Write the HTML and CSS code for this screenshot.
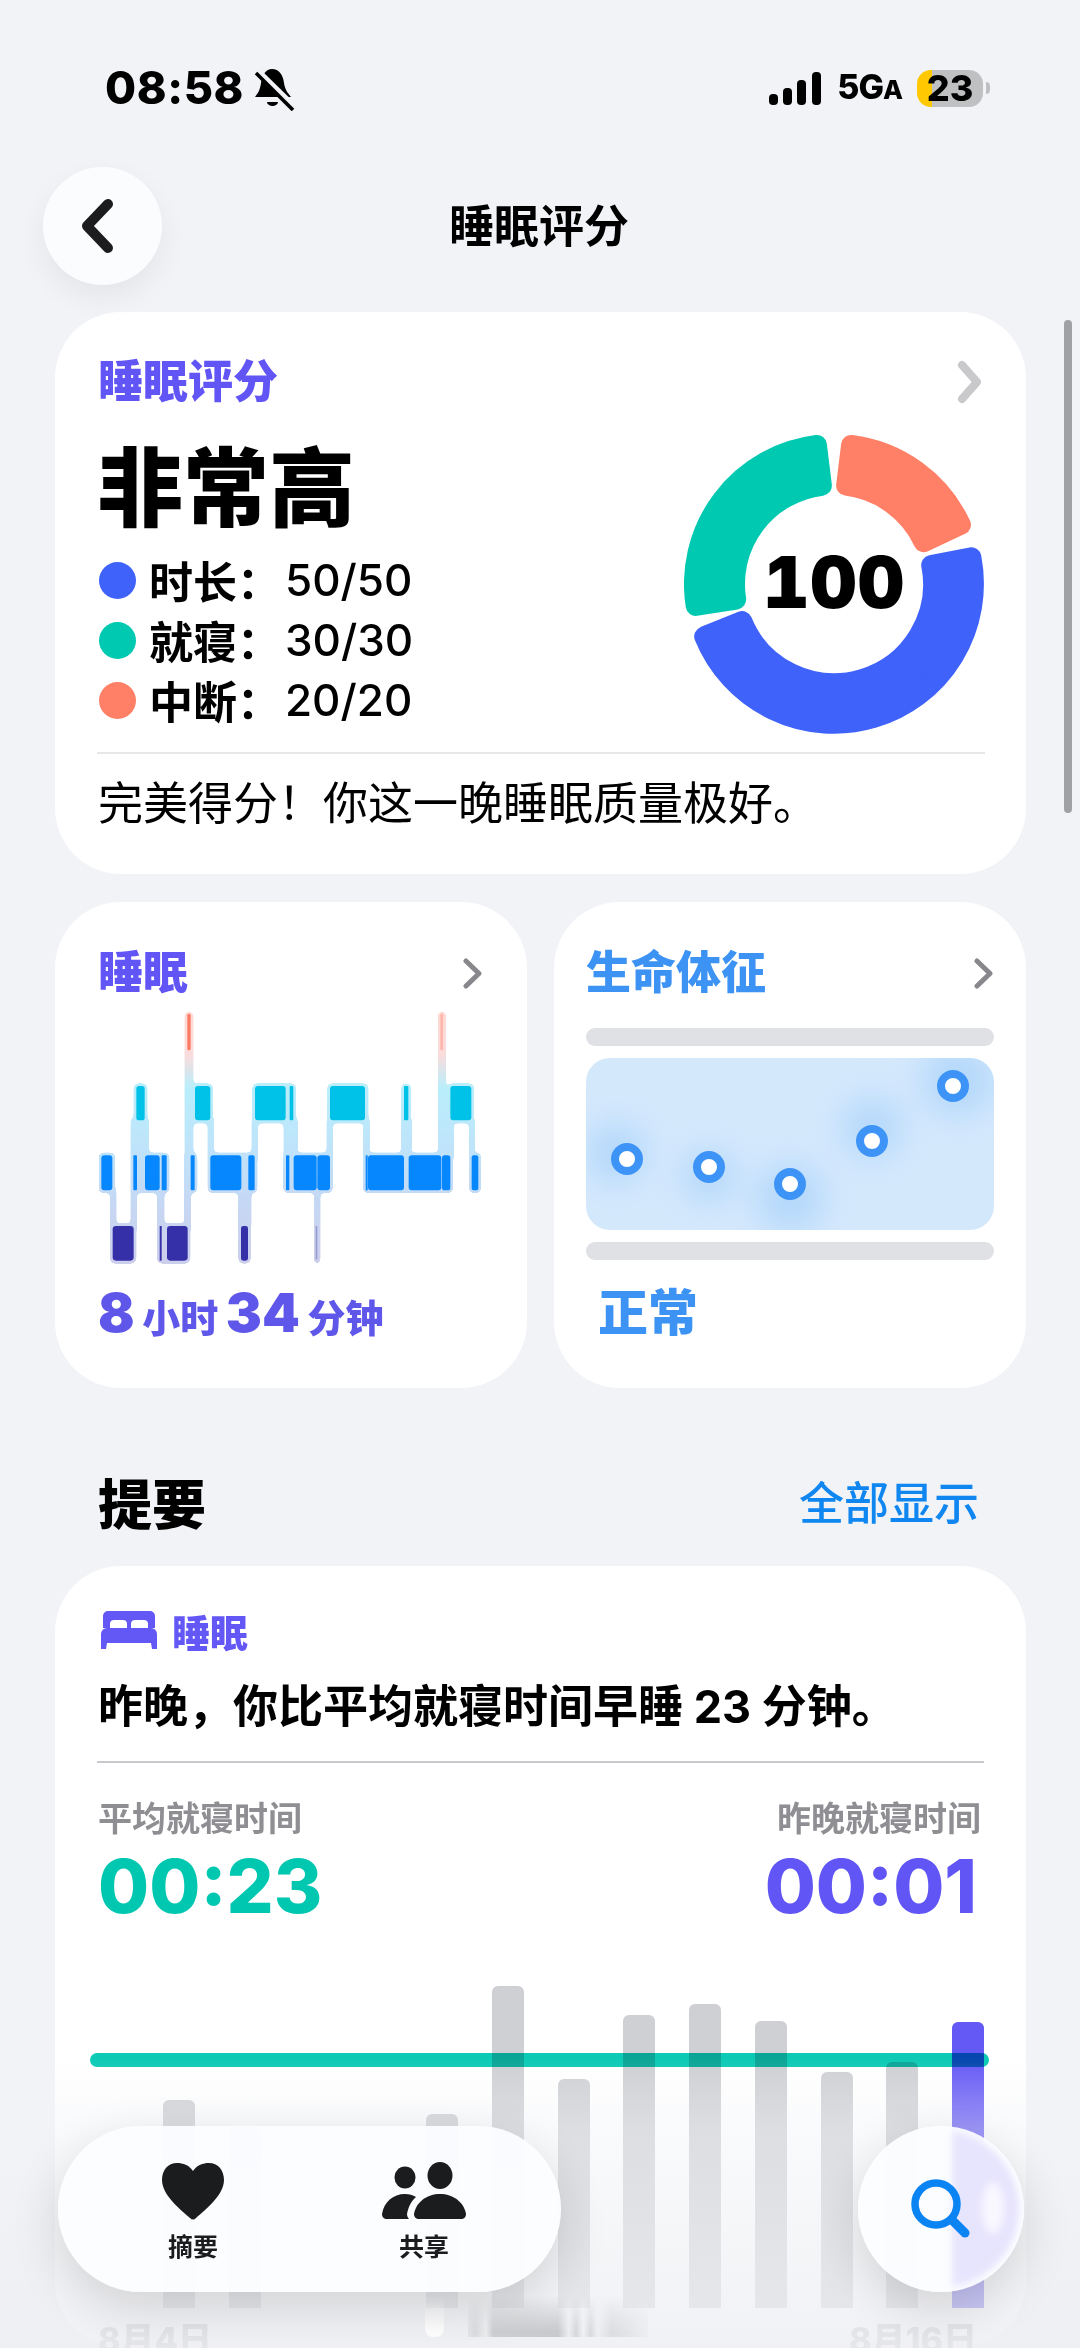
FILE: index.html
```html
<!DOCTYPE html>
<html lang="zh">
<head>
  <meta charset="UTF-8">
  <title>睡眠评分</title>
  <link rel="stylesheet" href="styles.css">
</head>
<body>

<div class="status">
  <div class="status-left">
    <span class="clock">08:58</span>
    <svg class="bell" viewBox="14 15 42 46">
      <path d="M33 19C40 19 44 25 45 33C46 40 49 43 52 47H16C19 43 21 40 22 33C23 25 27 19 33 19Z"/>
      <path d="M28 52h11a5.5 4 0 0 1-11 0Z"/>
      <path d="M17 20L57 59" stroke="#f1f3f7" stroke-width="7"/>
      <path d="M17 23L54 60" stroke="#000" stroke-width="3.6"/>
    </svg>
  </div>
  <div class="status-right">
    <svg class="signal" viewBox="0 0 52 33">
      <rect x="0" y="22" width="9" height="11" rx="4"/>
      <rect x="14" y="16" width="9" height="17" rx="4"/>
      <rect x="28" y="8" width="9" height="25" rx="4"/>
      <rect x="43" y="0" width="9" height="33" rx="4"/>
    </svg>
    <span class="net">5G<small>A</small></span>
    <span class="battery"><span class="battery-num">23</span></span>
    <span class="battery-nub"></span>
  </div>
</div>

<div class="topbar">
  <div class="back">
    <svg width="40" height="60" viewBox="0 0 40 60"><path d="M29 8L8 30L29 52" fill="none" stroke="#1c1c1e" stroke-width="10" stroke-linecap="round" stroke-linejoin="round"/></svg>
  </div>
  <div class="page-title">睡眠评分</div>
</div>

<main class="content">

  <section class="card score">
    <div class="card-head">
      <h3 class="card-title purple">睡眠评分</h3>
      <svg class="chev-big" width="25" height="44" viewBox="0 0 25 44"><path d="M5 5L20 22L5 39" fill="none" stroke="#c9c9cb" stroke-width="8" stroke-linecap="round" stroke-linejoin="round"/></svg>
    </div>
    <div class="score-body">
      <div>
        <div class="score-word">非常高</div>
        <ul class="legend">
          <li><i class="dot blue"></i><b>时长<i class="colon">&#xFF1A;</i></b><span>50/50</span></li>
          <li><i class="dot teal"></i><b>就寝<i class="colon">&#xFF1A;</i></b><span>30/30</span></li>
          <li><i class="dot coral"></i><b>中断<i class="colon">&#xFF1A;</i></b><span>20/20</span></li>
        </ul>
      </div>
      <div class="donut">
        <svg width="300" height="300" viewBox="0 0 300 300">
          <path fill="#3f62fb" stroke="#3f62fb" d="M287.4 123.3A140 140 0 0 1 20.2 202.4L58.2 187.1A99 99 0 0 0 247.2 131.1Z"/>
          <path fill="#00c9b1" stroke="#00c9b1" d="M11.7 171.9A140 140 0 0 1 132.9 11L137.9 51.7A99 99 0 0 0 52.2 165.5Z"/>
          <path fill="#ff8066" stroke="#ff8066" d="M167.1 11A140 140 0 0 1 276.9 90.8L239.7 108.2A99 99 0 0 0 162.1 51.7Z"/>
        </svg>
        <span class="donut-num">100</span>
      </div>
    </div>
    <div class="rule"></div>
    <p class="score-note">完美得分&#xFF01;你这一晚睡眠质量极好。</p>
  </section>

  <div class="two-up">
    <section class="card mini sleep">
      <div class="card-head">
        <h3 class="card-title purple">睡眠</h3>
        <svg class="chev" width="19" height="31" viewBox="0 0 19 31"><path d="M3 3L16 15.5L3 28" fill="none" stroke="#88888c" stroke-width="5" stroke-linecap="round" stroke-linejoin="round"/></svg>
      </div>
      <svg class="hypno" width="384" height="254" viewBox="150 340 1152 762">
        <defs>
          <linearGradient id="halo" gradientUnits="userSpaceOnUse" x1="0" y1="340" x2="0" y2="1095">
            <stop offset="0" stop-color="#ffd9d2"/>
            <stop offset=".17" stop-color="#fadcdc"/>
            <stop offset=".3" stop-color="#b9eefb"/>
            <stop offset=".55" stop-color="#bfe3fa"/>
            <stop offset=".75" stop-color="#c5d8f4"/>
            <stop offset="1" stop-color="#cdcfec"/>
          </linearGradient>
          <filter id="goo" x="-5%" y="-5%" width="110%" height="110%">
            <feGaussianBlur stdDeviation="7"/>
            <feColorMatrix values="1 0 0 0 0 0 1 0 0 0 0 0 1 0 0 0 0 0 18 -7"/>
          </filter>
        </defs>
        <g fill="url(#halo)" filter="url(#goo)">
          <rect x="408" y="340" width="24" height="440" rx="9"/><rect x="1168" y="340" width="22" height="440" rx="9"/>
          <path d="M184 870h17v120h-17zM246 660h17v330h-17zM262 660h12v20h12v100h-14v-20h-10zM282 660h17v120h-17zM325 870h20v120h-20zM407 770h18v220h-18zM477 660h17v120h-17zM569 870h17v120h-17zM589 870h17v120h-17zM609 660h17v120h-17zM705 660h40v120h-40zM797 870h16v220h-16zM834 660h17v120h-17zM944 660h17v120h-17zM1057 660h15v120h-15zM1072 660h15v120h-15zM1196 660h17v120h-17zM1261 660h15v120h-15z"/>
          <rect x="255" y="555" width="39" height="118" rx="10"/><rect x="431" y="555" width="60" height="118" rx="10"/><rect x="611" y="555" width="129" height="118" rx="10"/><rect x="836" y="555" width="121" height="118" rx="10"/><rect x="1058" y="555" width="27" height="118" rx="10"/><rect x="1197" y="555" width="77" height="118" rx="10"/>
          <rect x="150" y="763" width="47" height="119" rx="10"/><rect x="246" y="763" width="114" height="119" rx="10"/><rect x="418" y="763" width="26" height="119" rx="10"/><rect x="477" y="763" width="147" height="119" rx="10"/><rect x="704" y="763" width="146" height="119" rx="10"/><rect x="943" y="763" width="268" height="119" rx="10"/><rect x="1261" y="763" width="34" height="119" rx="10"/>
          <rect x="184" y="975" width="77" height="119" rx="12"/><rect x="325" y="975" width="98" height="119" rx="12"/><rect x="569" y="975" width="35" height="119" rx="12"/><rect x="796" y="975" width="16" height="119" rx="8"/>
        </g>
        <rect x="415" y="345" width="10" height="110" rx="5" fill="#fb7b64"/>
        <rect x="1174" y="345" width="8" height="110" rx="4" fill="#fdb6ab"/>
        <g fill="#00c2e8">
          <rect x="262" y="562" width="25" height="103" rx="8"/><rect x="438" y="562" width="46" height="103" rx="9"/><rect x="618" y="562" width="92" height="103" rx="9"/><rect x="722" y="562" width="11" height="103" rx="3"/><rect x="843" y="562" width="105" height="103" rx="9"/><rect x="1065" y="562" width="13" height="103" rx="3"/><rect x="1204" y="562" width="63" height="103" rx="9"/>
        </g>
        <g fill="#0787fd">
          <rect x="157" y="770" width="33" height="105" rx="9"/><rect x="253" y="770" width="11" height="105" rx="3"/><rect x="288" y="770" width="44" height="105" rx="9"/><rect x="338" y="770" width="15" height="105" rx="3"/><rect x="425" y="770" width="12" height="105" rx="3"/><rect x="484" y="770" width="93" height="105" rx="9"/><rect x="598" y="770" width="19" height="105" rx="5"/><rect x="711" y="770" width="10" height="105" rx="3"/><rect x="734" y="770" width="69" height="105" rx="9"/><rect x="805" y="770" width="38" height="105" rx="9"/><rect x="950" y="770" width="6" height="105"/><rect x="957" y="770" width="108" height="105" rx="9"/><rect x="1079" y="770" width="98" height="105" rx="9"/><rect x="1179" y="770" width="25" height="105" rx="8"/><rect x="1268" y="770" width="20" height="105" rx="6"/>
        </g>
        <g fill="#3630a8">
          <rect x="191" y="982" width="63" height="104" rx="10"/><rect x="332" y="982" width="6" height="104"/><rect x="354" y="982" width="62" height="104" rx="10"/><rect x="576" y="982" width="21" height="104" rx="7"/>
        </g>
        <rect x="800" y="982" width="5" height="100" fill="#9a9cd0"/>
      </svg>
      <div class="duration"><em>8</em> 小时 <em>34</em> 分钟</div>
    </section>

    <section class="card mini vitals">
      <div class="card-head">
        <h3 class="card-title sky">生命体征</h3>
        <svg class="chev" width="19" height="31" viewBox="0 0 19 31"><path d="M3 3L16 15.5L3 28" fill="none" stroke="#88888c" stroke-width="5" stroke-linecap="round" stroke-linejoin="round"/></svg>
      </div>
      <div class="range-bar"></div>
      <div class="range-panel">
        <svg width="408" height="172" viewBox="0 0 408 172">
          <defs><filter id="soft" x="-30%" y="-60%" width="160%" height="220%"><feGaussianBlur stdDeviation="16"/></filter></defs>
          <g fill="#b4d8fb" filter="url(#soft)">
            <circle cx="30" cy="95" r="30"/><circle cx="123" cy="118" r="26"/><circle cx="204" cy="140" r="34"/><circle cx="286" cy="70" r="30"/><circle cx="372" cy="22" r="36"/>
          </g>
          <g fill="#fff" stroke="#3d94f6" stroke-width="8">
            <circle cx="41" cy="101" r="12"/><circle cx="123" cy="109" r="12"/><circle cx="204" cy="126" r="12"/><circle cx="286" cy="83" r="12"/><circle cx="367" cy="28" r="12"/>
          </g>
        </svg>
      </div>
      <div class="range-bar"></div>
      <div class="vitals-word">正常</div>
    </section>
  </div>

  <div class="section-head">
    <h2>提要</h2>
    <span class="show-all">全部显示</span>
  </div>

  <section class="card digest">
    <div class="tag">
      <svg width="56" height="38" viewBox="0 0 56 38" fill="#6357f5">
        <path d="M7 0H49A5 5 0 0 1 54 5V17H47V12A4 4 0 0 0 43 9H34A4 4 0 0 0 30 13V17H26V13A4 4 0 0 0 22 9H13A4 4 0 0 0 9 12V17H2V5A5 5 0 0 1 7 0Z"/>
        <path d="M6 17H50A6 6 0 0 1 56 23V38H51L50 32H6L5 38H0V23A6 6 0 0 1 6 17Z"/>
      </svg>
      <span>睡眠</span>
    </div>
    <p class="digest-line">昨晚&#xFF0C;你比平均就寝时间早睡 23 分钟。</p>
    <div class="rule dark"></div>
    <div class="compare">
      <div>
        <div class="compare-label">平均就寝时间</div>
        <div class="compare-time teal-text">00:23</div>
      </div>
      <div class="right">
        <div class="compare-label">昨晚就寝时间</div>
        <div class="compare-time purple">00:01</div>
      </div>
    </div>
    <div class="bars">
      <div class="bar" style="height:208px"></div>
      <div class="bar" style="height:181px"></div>
      <div class="bar" style="height:0"></div>
      <div class="bar" style="height:0"></div>
      <div class="bar" style="height:194px"></div>
      <div class="bar" style="height:322px"></div>
      <div class="bar" style="height:229px"></div>
      <div class="bar" style="height:293px"></div>
      <div class="bar" style="height:304px"></div>
      <div class="bar" style="height:287px"></div>
      <div class="bar" style="height:236px"></div>
      <div class="bar" style="height:246px"></div>
      <div class="bar now" style="height:286px"></div>
      <div class="avg-line"></div>
    </div>
    <div class="dates"><span>8月4日</span><span>8月16日</span></div>
  </section>

</main>

<div class="fade"></div>
<div class="smudge-pill"></div>
<div class="smudge"></div>
<div class="scrollbar"></div>

<nav class="tabs">
  <div class="tab">
    <svg width="62" height="58" viewBox="0 0 62 58" fill="#1b1c1e"><path d="M31 9C27 3 21 1 15 1C6 1 0 8 0 18C0 33 18 47 28 56C30 58 32 58 34 56C44 47 62 33 62 18C62 8 56 1 47 1C41 1 35 3 31 9Z"/></svg>
    <span>摘要</span>
  </div>
  <div class="tab">
    <svg width="84" height="58" viewBox="0 0 84 58" fill="#1b1c1e">
      <ellipse cx="58" cy="13.5" rx="12.5" ry="13.5"/>
      <ellipse cx="23" cy="15.5" rx="10.5" ry="11"/>
      <path d="M32 52C34 40 45 32 58 32C71 32 82 40 84 52C84 55 82 57 79 57H37C34 57 32 55 32 52Z"/>
      <path d="M0 52C2 40 11 32 23 32C27 32 31 33 34 35C29 39 26 46 25 52C25 54 26 56 27 57H5C2 57 0 55 0 52Z"/>
    </svg>
    <span>共享</span>
  </div>
</nav>

<div class="search-btn">
  <svg width="60" height="60" viewBox="0 0 60 60"><circle cx="25" cy="25" r="21" fill="none" stroke="#0b84f3" stroke-width="7.5"/><path d="M41 41L54 54" stroke="#0b84f3" stroke-width="9" stroke-linecap="round"/></svg>
</div>

</body>
</html>
```

FILE: styles.css
```css
* {
  box-sizing: border-box;
}

html, body {
  margin: 0;
  padding: 0;
}

body {
  position: relative;
  width: 1080px;
  height: 2348px;
  overflow: hidden;
  background: #f1f3f7;
  color: #000;
  font-family: "Inter", "Noto Sans CJK SC", sans-serif;
}

h2, h3, p, ul {
  margin: 0;
  padding: 0;
}

/* status bar */
.status {
  display: flex;
  justify-content: space-between;
  align-items: center;
  height: 38px;
  padding: 0 90px 0 105px;
  margin-top: 69px;
}

.status-left, .status-right {
  display: flex;
  align-items: center;
}

.clock {
  font-size: 45px;
  font-weight: 800;
  line-height: 38px;
  letter-spacing: 0.6px;
}

.bell {
  width: 42px;
  height: 46px;
  margin-left: 9px;
}

.signal {
  width: 52px;
  height: 33px;
  fill: #000;
}

.net {
  margin-left: 16px;
  font-size: 34px;
  font-weight: 800;
  line-height: 38px;
  letter-spacing: -1px;
}

.net small {
  font-size: 26px;
}

.battery {
  display: flex;
  align-items: center;
  justify-content: center;
  width: 66px;
  height: 37px;
  margin-left: 15px;
  border-radius: 14px;
  background: linear-gradient(90deg, #ffc800 0 15px, #bfc0c2 15px);
}

.battery-num {
  font-size: 36px;
  font-weight: 800;
  line-height: 37px;
}

.battery-nub {
  width: 4px;
  height: 12px;
  margin-left: 3px;
  border-radius: 0 6px 6px 0;
  background: #bfc0c2;
}

/* top bar */
.topbar {
  display: grid;
  grid-template-columns: 1fr auto 1fr;
  align-items: center;
  height: 118px;
  margin-top: 60px;
  padding: 0 43px;
}

.back {
  display: flex;
  align-items: center;
  justify-content: center;
  width: 119px;
  height: 118px;
  border-radius: 50%;
  background: #fbfcfe;
  box-shadow: 0 12px 30px rgba(0, 0, 0, 0.06);
}

.back svg {
  margin-left: -8px;
}

.page-title {
  padding-top: 2px;
  margin-left: -2px;
  font-size: 45px;
  font-weight: 700;
  line-height: 60px;
}

/* cards */
.content {
  margin-top: 27px;
  padding: 0 54px 0 55px;
}

.card {
  background: #fff;
  border-radius: 66px;
}

.card-head {
  display: flex;
  justify-content: space-between;
  align-items: center;
  height: 50px;
}

.card-title {
  font-size: 45px;
  font-weight: 900;
  line-height: 50px;
}

.purple {
  color: #6155f5;
}

.sky {
  color: #3c93f4;
}

.teal-text {
  color: #00c7b0;
}

.score {
  height: 562px;
  padding: 45px 41px 0 43px;
}

.chev-big {
  margin-right: 3px;
}

.score-body {
  display: flex;
  justify-content: space-between;
  align-items: flex-start;
  margin-top: 32px;
}

.score-word {
  margin-left: -1px;
  font-size: 86px;
  font-weight: 900;
  line-height: 100px;
}

.legend {
  list-style: none;
  margin-top: 11px;
  margin-left: 1px;
}

.legend li {
  display: flex;
  align-items: center;
  height: 60px;
  font-size: 44px;
}

.legend b {
  width: 136px;
  font-weight: 700;
}

.colon {
  font-family: "Noto Sans CJK TC", sans-serif;
  font-style: normal;
}

.legend span {
  font-weight: 500;
}

.dot {
  width: 37px;
  height: 37px;
  margin-right: 13px;
  border-radius: 50%;
}

.dot.blue { background: #3f62fb; }
.dot.teal { background: #00c9b1; }
.dot.coral { background: #ff8066; }

.donut {
  position: relative;
  width: 300px;
  height: 300px;
  margin-top: -5px;
  margin-right: 1px;
}

.donut svg {
  display: block;
}

.donut path {
  stroke-width: 20;
  stroke-linejoin: round;
}

.donut-num {
  position: absolute;
  left: 0;
  right: 0;
  top: 110px;
  text-align: center;
  font-size: 72px;
  font-weight: 900;
  font-variant-numeric: tabular-nums;
  letter-spacing: 1px;
  line-height: 76px;
}

.rule {
  height: 2px;
  margin-top: 18px;
  margin-left: -1px;
  background: #e7e7ea;
}

.rule.dark {
  background: #c9c9cd;
  margin-top: 24px;
}

.score-note {
  margin-top: 20px;
  font-size: 45px;
  line-height: 60px;
  white-space: nowrap;
}

.two-up {
  display: grid;
  grid-template-columns: repeat(2, minmax(0, 1fr));
  gap: 27px;
  margin-top: 28px;
}

.mini {
  height: 486px;
  padding-top: 46px;
}

.sleep {
  padding-left: 43px;
  padding-right: 45px;
}

.hypno {
  display: block;
  margin-top: 14px;
  margin-left: 1px;
}

.duration {
  margin-top: 17px;
  color: #5f56ea;
  font-size: 38px;
  font-weight: 900;
  line-height: 60px;
  white-space: nowrap;
}

.duration em {
  font-style: normal;
  font-size: 54px;
}

.vitals {
  padding-left: 32px;
  padding-right: 32px;
}

.vitals .chev {
  margin-right: 1px;
}

.range-bar {
  height: 18px;
  margin-top: 30px;
  border-radius: 9px;
  background: #e0e1e5;
}

.range-panel + .range-bar {
  margin-top: 12px;
}

.range-panel {
  height: 172px;
  margin-top: 12px;
  overflow: hidden;
  border-radius: 24px;
  background: #d4e8fc;
}

.range-panel svg {
  display: block;
}

.vitals-word {
  margin-top: 23px;
  padding-left: 12px;
  color: #3c93f4;
  font-size: 50px;
  font-weight: 900;
  line-height: 60px;
}

/* digest */
.section-head {
  display: flex;
  justify-content: space-between;
  align-items: center;
  height: 64px;
  margin-top: 86px;
  padding: 0 47px 0 43px;
}

.section-head h2 {
  font-size: 54px;
  font-weight: 900;
  line-height: 64px;
}

.show-all {
  margin-top: -4px;
  color: #0f86f0;
  font-size: 45px;
  font-weight: 500;
  line-height: 64px;
}

.digest {
  height: 782px;
  margin-top: 28px;
  padding: 43px 42px 0 43px;
}

.tag {
  display: flex;
  align-items: center;
  gap: 15px;
  height: 42px;
  padding-left: 3px;
  color: #6357f5;
  font-size: 38px;
  font-weight: 900;
}

.digest-line {
  margin-top: 26px;
  font-size: 45px;
  font-weight: 700;
  line-height: 60px;
  white-space: nowrap;
}

.compare {
  display: flex;
  justify-content: space-between;
  margin-top: 36px;
  padding-right: 3px;
}

.compare .right {
  text-align: right;
}

.compare .right .compare-time {
  margin-right: 4px;
}

.compare-label {
  color: #8e8e93;
  font-size: 34px;
  font-weight: 700;
  line-height: 40px;
}

.compare-time {
  margin-top: 7px;
  font-size: 74px;
  font-weight: 800;
  line-height: 80px;
}

.bars {
  position: relative;
  display: flex;
  align-items: flex-end;
  gap: 33.75px;
  height: 348px;
  margin-top: 34px;
  padding-left: 65px;
}

.bar {
  flex: none;
  width: 32px;
  border-radius: 6px 6px 0 0;
  background: #cfd0d4;
}

.bar.now {
  background: #6559f5;
}

.avg-line {
  position: absolute;
  left: -8px;
  right: -5px;
  top: 93px;
  height: 14px;
  border-radius: 7px;
  background: #0ccab5;
  mix-blend-mode: multiply;
}

.dates {
  display: flex;
  justify-content: space-between;
  margin-top: 12px;
  padding-right: 7px;
  color: #b9babf;
  font-size: 34px;
  font-weight: 800;
  line-height: 40px;
}

/* overlays at the bottom */
.fade {
  position: absolute;
  left: 0;
  right: 0;
  bottom: 0;
  height: 290px;
  background: linear-gradient(180deg, rgba(241, 243, 247, 0) 0%, rgba(241, 243, 247, 0.4) 25%, rgba(238, 239, 243, 0.72) 85%, rgba(238, 239, 243, 0.85) 100%);
}

.smudge-pill {
  position: absolute;
  left: 425px;
  top: 2296px;
  width: 19px;
  height: 41px;
  border-radius: 0 0 8px 8px;
  background: linear-gradient(180deg, rgba(255, 255, 255, 0), #fff 85%);
}

.smudge {
  position: absolute;
  left: 468px;
  top: 2296px;
  width: 180px;
  height: 41px;
  background: linear-gradient(90deg, #e6e7ea 0, #dcdde0 4%, #eeeff1 10%, #cfd0d3 14%, #c8c9cc 50%, #eceef1 56%, #d5d6d9 60%, #f0f1f4 64%, #d9dadd 68%, #eeeff2 72%, #dcdde0 80%, #eceef1 100%);
  -webkit-mask-image: linear-gradient(180deg, transparent, #000 85%);
  mask-image: linear-gradient(180deg, transparent, #000 85%);
}

.scrollbar {
  position: absolute;
  left: 1064px;
  top: 320px;
  width: 8px;
  height: 493px;
  border-radius: 4px;
  background: #a0a1a4;
}

.tabs {
  position: absolute;
  left: 58px;
  top: 2126px;
  display: flex;
  gap: 111px;
  width: 503px;
  height: 166px;
  padding: 36px 0 0 75px;
  border-radius: 83px;
  background: rgba(252, 253, 255, 0.94);
  box-shadow: 0 16px 50px rgba(0, 0, 0, 0.14);
}

.tab {
  display: flex;
  flex-direction: column;
  align-items: center;
  width: 120px;
}

.tab span {
  margin-top: 12px;
  color: #1b1c1e;
  font-size: 25px;
  font-weight: 700;
  line-height: 30px;
}

.search-btn {
  position: absolute;
  left: 858px;
  top: 2126px;
  display: flex;
  align-items: center;
  justify-content: center;
  width: 166px;
  height: 166px;
  border-radius: 50%;
  background: rgba(252, 253, 255, 0.96);
  box-shadow: 0 16px 50px rgba(0, 0, 0, 0.14);
}

.search-btn svg {
  position: relative;
}

.search-btn::before {
  content: "";
  position: absolute;
  left: 5px;
  top: 5px;
  width: 156px;
  height: 156px;
  border-radius: 50%;
  background: linear-gradient(90deg, rgba(231, 228, 253, 0) 56%, #e7e4fd 59%);
  filter: blur(3px);
}

.search-btn::after {
  content: "";
  position: absolute;
  left: 124px;
  top: 56px;
  width: 22px;
  height: 52px;
  border-radius: 50%;
  background: #f9f8ff;
  filter: blur(4px);
}
```
